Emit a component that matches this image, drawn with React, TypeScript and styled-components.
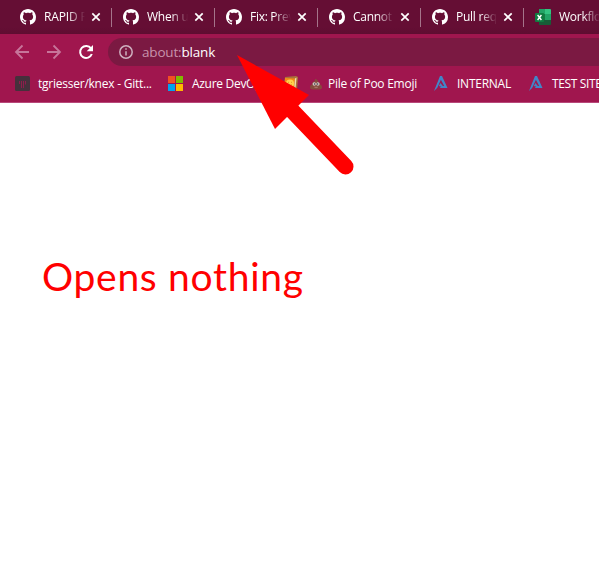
import React from "react";
import styled, { createGlobalStyle } from "styled-components";

const GlobalStyle = createGlobalStyle`
  * { box-sizing: border-box; }
  html, body { margin: 0; background: #fff; overflow: hidden; }
  body { font-family: "Open Sans", "Noto Sans", sans-serif; }
`;

const Window = styled.div`
  position: relative;
  width: 599px;
  height: 564px;
  overflow: hidden;
  background: #fff;
`;

const TabStrip = styled.div`
  display: flex;
  height: 34px;
  padding: 0 0 0 9px;
  background: linear-gradient(#650e34 0, #650e34 27px, #5f0d31 34px);
`;

const TabItem = styled.div`
  display: flex;
  align-items: center;
  flex: 0 0 103px;
  height: 34px;
  padding-left: 11px;
  background: linear-gradient(#a5748a, #a5748a) 102px 8px / 1px 19px no-repeat;
`;

const TabTitle = styled.span<{ $spacing: number }>`
  flex: 0 0 41px;
  margin-left: 8px;
  overflow: hidden;
  white-space: nowrap;
  font-size: 12px;
  font-weight: 500;
  line-height: 18px;
  letter-spacing: ${(p) => p.$spacing}px;
  color: #fff;
  mask-image: linear-gradient(90deg, #000 24px, transparent 41px);
`;

const CloseIcon = styled.svg`
  flex: none;
  width: 10px;
  height: 10px;
  margin-left: 6px;
`;

const Toolbar = styled.div`
  display: flex;
  align-items: center;
  height: 36px;
  padding-left: 14px;
  background: #a0164e;
`;

const NavIcon = styled.svg`
  flex: none;
  width: 16px;
  height: 16px;
  margin-right: 16px;
`;

const AddressBar = styled.div`
  display: flex;
  align-items: center;
  flex: 1;
  height: 28px;
  margin-left: -2px;
  padding-left: 11px;
  border-radius: 14px 0 0 14px;
  background: #7b1942;
`;

const Url = styled.span`
  margin-left: 9px;
  font-size: 13.5px;
  font-weight: 500;
  line-height: 20px;
  letter-spacing: -0.18px;
  color: #fff;
`;

const Scheme = styled.span`
  color: #c893aa;
`;

const BookmarkBar = styled.div`
  display: flex;
  align-items: center;
  height: 33px;
  padding: 0 0 5px 15px;
  border-bottom: 1px solid #b8487a;
  background: #a0164e;
`;

const Bookmark = styled.div<{ $width: number }>`
  display: flex;
  align-items: center;
  flex: 0 0 ${(p) => p.$width}px;
`;

const BookmarkLabel = styled.span<{ $spacing: number; $gap: number }>`
  margin-left: ${(p) => p.$gap}px;
  font-size: 12px;
  font-weight: 500;
  line-height: 18px;
  letter-spacing: ${(p) => p.$spacing}px;
  white-space: nowrap;
  color: #fff;
`;

const Glyph = styled.svg`
  display: block;
  flex: none;
`;

const Content = styled.main`
  padding: 144px 0 0 42px;
`;

const Note = styled.div`
  font-family: Lato, "Open Sans", sans-serif;
  font-size: 39px;
  line-height: 58px;
  letter-spacing: 0.7px;
  white-space: nowrap;
  color: #f00;
`;

const Arrow = styled.svg`
  position: absolute;
  left: 230px;
  top: 48px;
`;

const GitHub = () => (
  <Glyph width="16" height="16" viewBox="0 0 16 16" fill="#fff">
    <path d="M8 0C3.58 0 0 3.58 0 8c0 3.54 2.29 6.53 5.47 7.59.4.07.55-.17.55-.38 0-.19-.01-.82-.01-1.49-2.01.37-2.53-.49-2.69-.94-.09-.23-.48-.94-.82-1.13-.28-.15-.68-.52-.01-.53.63-.01 1.08.58 1.23.82.72 1.21 1.87.87 2.33.66.07-.52.28-.87.51-1.07-1.78-.2-3.64-.89-3.64-3.95 0-.87.31-1.59.82-2.15-.08-.2-.36-1.02.08-2.12 0 0 .67-.21 2.2.82.64-.18 1.32-.27 2-.27s1.36.09 2 .27c1.53-1.04 2.2-.82 2.2-.82.44 1.1.16 1.92.08 2.12.51.56.82 1.27.82 2.15 0 3.07-1.87 3.75-3.65 3.95.29.25.54.73.54 1.48 0 1.07-.01 1.93-.01 2.2 0 .21.15.46.55.38A8.01 8.01 0 0 0 16 8c0-4.42-3.58-8-8-8z" />
  </Glyph>
);

const Excel = () => (
  <Glyph width="16" height="16" viewBox="0 0 16 16">
    <path d="M4 0h6v5H4z" fill="#21a366" />
    <path d="M10 0h5q1 0 1 1v4h-6z" fill="#33c481" />
    <path d="M4 5h6v6H4z" fill="#107c41" />
    <path d="M10 5h6v6h-6z" fill="#21a366" />
    <path d="M4 11h12v4q0 1-1 1H4z" fill="#185c37" />
    <rect y="4" width="9" height="9" rx="1" fill="#107c41" />
    <path d="m2.6 6 3.8 5M6.4 6l-3.8 5" stroke="#fff" strokeWidth="1.4" />
  </Glyph>
);

const Close = () => (
  <CloseIcon viewBox="0 0 10 10">
    <path d="m1.3 1.3 7.4 7.4m0-7.4L1.3 8.7" stroke="#fff" strokeWidth="1.7" />
  </CloseIcon>
);

const Gitter = () => (
  <Glyph width="15" height="15" viewBox="0 0 15 15">
    <rect width="15" height="15" rx="1.5" fill="#46303c" />
    <path d="M4.5 5v3M6.5 5v7M8.5 5v7M10.5 5v3.5" stroke="#8e1d4c" />
  </Glyph>
);

const Microsoft = () => (
  <Glyph width="15" height="15" viewBox="0 0 15 15">
    <path fill="#f25022" d="M0 0h7v7H0z" />
    <path fill="#7fba00" d="M8 0h7v7H8z" />
    <path fill="#00a4ef" d="M0 8h7v7H0z" />
    <path fill="#ffb900" d="M8 8h7v7H8z" />
  </Glyph>
);

const Book = () => (
  <Glyph width="16" height="16" viewBox="0 0 16 16">
    <path d="m2 1 11-1 2 1-1 13-2 1H1z" fill="#a9713b" />
    <path d="m2 2 10 .5L11 14l-10-1z" fill="#f58a16" />
    <path d="m12 2.5 1.500-1L12.500 13 11 14z" fill="#f4ddae" />
    <circle cx="7" cy="7.500" r="4" fill="#ffd34e" />
    <path d="M5.500 5.800v1M8.500 5.800v1M5 8.600q2 2 4 0" stroke="#d98a22" strokeWidth=".8" fill="none" />
  </Glyph>
);

const Poo = () => (
  <Glyph width="12" height="12" viewBox="0 0 12 12">
    <path d="M5 1q3 .5 3 2.500 2 .5 1.800 2.800Q12 7.200 12 9q0 2.500-3 2.500H3Q0 11.500 0 9q0-2 2.200-2.700-.4-2.100 1.800-2.800Q5.500 2.500 5 1" fill="#854b3e" />
    <circle cx="4.300" cy="6" r="1.700" fill="#d9c9c6" />
    <circle cx="7.900" cy="6" r="1.700" fill="#d9c9c6" />
    <circle cx="4.600" cy="6" r=".8" fill="#38404c" />
    <circle cx="7.600" cy="6" r=".8" fill="#38404c" />
    <path d="M4 8.800h4.200Q8 10.200 6.100 10.200T4 8.800" fill="#a8766a" />
  </Glyph>
);

const Peak = () => (
  <Glyph width="14" height="15" viewBox="0 0 14 15">
    <path d="M6 0h2l5.500 12H5.800l1.700-2h2.700L6.900 3.700 3.300 11.700 0 15z" fill="#4285c7" />
    <path d="M6.500 7 10 11.600 4.800 10z" fill="#4285c7" />
  </Glyph>
);

const tabs = [
  { title: "RAPID Pr", spacing: -0.15 },
  { title: "When us", spacing: -0.25 },
  { title: "Fix: Preve", spacing: -0.28 },
  { title: "Cannot r", spacing: -0.3 },
  { title: "Pull requ", spacing: -0.25 },
];

const bookmarks = [
  { Icon: Gitter, label: "tgriesser/knex - Gitt...", width: 153, gap: 8, spacing: -0.24 },
  { Icon: Microsoft, label: "Azure DevOps", width: 115, gap: 9, spacing: -0.3 },
  { Icon: Book, label: "", width: 27, gap: 0, spacing: 0 },
  { Icon: Poo, label: "Pile of Poo Emoji", width: 124, gap: 6, spacing: -0.26 },
  { Icon: Peak, label: "INTERNAL", width: 95, gap: 9, spacing: -0.25 },
  { Icon: Peak, label: "TEST SITE", width: 90, gap: 9, spacing: -0.35 },
];

export default function App() {
  return (
    <Window>
      <GlobalStyle />
      <TabStrip>
        {tabs.map(({ title, spacing }) => (
          <TabItem key={title}>
            <GitHub />
            <TabTitle $spacing={spacing}>{title}</TabTitle>
            <Close />
          </TabItem>
        ))}
        <TabItem>
          <Excel />
          <TabTitle $spacing={-0.25}>Workflow</TabTitle>
        </TabItem>
      </TabStrip>
      <Toolbar>
        <NavIcon viewBox="0 0 16 16" fill="none" stroke="#c7759a" strokeWidth="1.8">
          <path d="M15 8H2m6.500-6.500L2 8l6.500 6.500" />
        </NavIcon>
        <NavIcon viewBox="0 0 16 16" fill="none" stroke="#c7759a" strokeWidth="1.8">
          <path d="M1 8h13M7.500 1.500 14 8l-6.500 6.500" />
        </NavIcon>
        <NavIcon viewBox="0 0 16 16">
          <path d="M13 4.400A6 6 0 1 0 13.800 10" fill="none" stroke="#fff" strokeWidth="2" />
          <path d="M15 1v6.300H8.700z" fill="#fff" />
        </NavIcon>
        <AddressBar>
          <Glyph width="14" height="14" viewBox="0 0 14 14" fill="none" stroke="#ceb0bf" strokeWidth="1.5">
            <circle cx="7" cy="7" r="6.200" />
            <path d="M7 6.200v4.300M7 3.300v1.500" />
          </Glyph>
          <Url><Scheme>about:</Scheme>blank</Url>
        </AddressBar>
      </Toolbar>
      <BookmarkBar>
        {bookmarks.map(({ Icon, label, width, gap, spacing }, index) => (
          <Bookmark key={index} $width={width}>
            <Icon />
            {label && <BookmarkLabel $spacing={spacing} $gap={gap}>{label}</BookmarkLabel>}
          </Bookmark>
        ))}
      </BookmarkBar>
      <Content>
        <Note>Opens nothing</Note>
      </Content>
      <Arrow width="130" height="132" viewBox="0 0 130 132">
        <path d="M50 50 115.500 118.500" stroke="#f00" strokeWidth="16" strokeLinecap="round" />
        <path d="M7 7 79 47 45 81z" fill="#f00" />
      </Arrow>
    </Window>
  );
}
